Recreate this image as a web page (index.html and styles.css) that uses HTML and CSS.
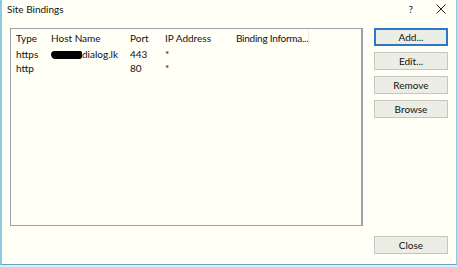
FILE: index.html
```html
<!DOCTYPE html>
<html lang="en">
<head>
  <meta charset="utf-8">
  <title>Site Bindings</title>
  <link rel="stylesheet" href="styles.css">
</head>
<body>
<div class="window">
  <div class="titlebar">
    <span class="title">Site Bindings</span>
    <span class="help">?</span>
    <svg class="close-x" width="10" height="10" viewBox="0 0 10 10">
      <path d="M0.5 0.5 L9.5 9.5 M9.5 0.5 L0.5 9.5" stroke="#222" stroke-width="1" fill="none"/>
    </svg>
  </div>

  <div class="main">
    <div class="list">
      <div class="row head">
        <span class="c-type">Type</span>
        <span class="c-host">Host Name</span>
        <span class="c-port">Port</span>
        <span class="c-ip">IP Address</span>
        <span class="c-info">Binding Informa...</span>
      </div>
      <div class="row">
        <span class="c-type">https</span>
        <span class="c-host"><i class="redact"></i>dialog.lk</span>
        <span class="c-port">443</span>
        <span class="c-ip">*</span>
        <span class="c-info"></span>
      </div>
      <div class="row">
        <span class="c-type">http</span>
        <span class="c-host"></span>
        <span class="c-port">80</span>
        <span class="c-ip">*</span>
        <span class="c-info"></span>
      </div>
    </div>

    <div class="actions">
      <button class="btn default">Add...</button>
      <button class="btn">Edit...</button>
      <button class="btn">Remove</button>
      <button class="btn">Browse</button>
    </div>
  </div>

  <div class="footer">
    <button class="btn">Close</button>
  </div>
</div>
</body>
</html>
```

FILE: styles.css
```css
:root { --bg:#fffff5; --edge:#8ccbe2; --btn:#ecede4; --btn-line:#c6c6c0; --list-line:#a0a0aa; }
body{margin:0;background:#d9eef7;font:10px/1.2 Lato,"Noto Sans",sans-serif;color:#111}
.window{box-sizing:border-box;width:457px;height:265px;background:var(--bg);
        border-left:2px solid var(--edge);border-right:1px solid var(--edge);
        border-bottom:1px solid #6aa3c6;display:flex;flex-direction:column}
.titlebar{box-sizing:border-box;height:28px;flex:none;display:flex;align-items:flex-start;padding:3px 0 0 5px}
.title{flex:1}
.help{margin-right:23px}
.close-x{margin:1px 10px 0 0}

.main{display:flex;padding-left:8px}
.list{box-sizing:border-box;width:353px;height:198px;border:1px solid var(--list-line);
      border-right-width:2px;padding:1px 0 0 5px}
.row{display:flex;height:14px;white-space:nowrap}
.row.head{height:16px;align-items:center;margin-bottom:2px}
.row span{display:block}
.c-type{width:35px}
.c-host{width:79px}
.c-port{width:35px}
.c-ip{width:71px}
.c-info{width:72px}
.head .c-info{border-right:1px solid #ececea;height:16px;line-height:16px;letter-spacing:-.25px;overflow:hidden}
.redact{display:inline-block;width:31px;height:8px;background:#000;border-radius:4px 2px 3px 5px;
        vertical-align:-1px}

.actions{display:flex;flex-direction:column;gap:6px;margin-left:11px}
.btn{box-sizing:border-box;width:74px;height:18px;padding:0;background:var(--btn);
     border:1px solid var(--btn-line);font:inherit;color:#111}
.btn.default{border:2px solid #2a78c6}

.footer{margin-top:auto;display:flex;justify-content:flex-end;padding:0 8px 10px 0}
```
